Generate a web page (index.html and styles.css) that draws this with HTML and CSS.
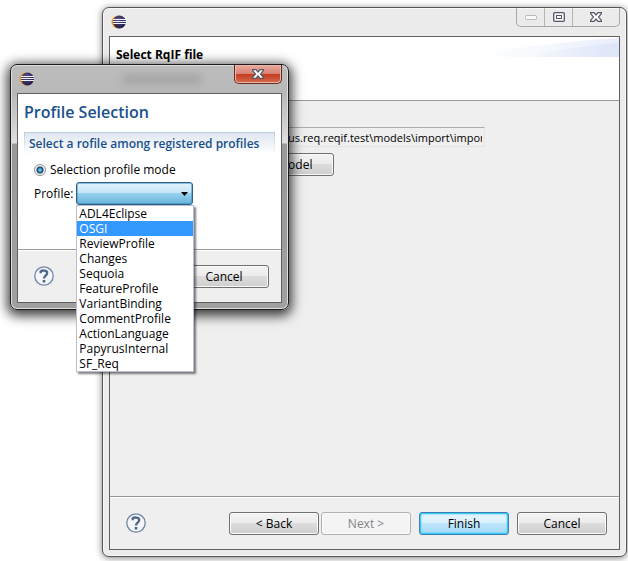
FILE: index.html
```html
<!DOCTYPE html>
<html lang="en">
<head>
<meta charset="utf-8">
<title>Select RqIF file</title>
<link rel="stylesheet" href="styles.css">
</head>
<body>
<svg class="defs" aria-hidden="true">
  <defs>
    <radialGradient id="ball" cx="40%" cy="30%" r="75%">
      <stop offset="0" stop-color="#554f86"/><stop offset="1" stop-color="#1f1a45"/>
    </radialGradient>
  </defs>
  <symbol id="eclipse" viewBox="0 0 16 16">
    <circle cx="7" cy="8" r="6.5" fill="#f09020"/>
    <circle cx="8.5" cy="8" r="6.5" fill="url(#ball)"/>
    <path d="M2 5.5H15M2 7.5H15M2 9.5H15" stroke="#eef0fb" stroke-width="1"/>
  </symbol>
  <symbol id="help" viewBox="0 0 20 20">
    <circle cx="10" cy="10" r="9.2" fill="#f4f6f9" stroke="#6f86a8" stroke-width="1.3"/>
    <path d="M6.7 7.2V5.3C8 4.3 13.2 3.8 13.2 7C13.2 9.6 10 9.5 10 12.4" fill="none" stroke="#50658c" stroke-width="2.3"/>
    <path d="M8.7 14h2.6v2.5H8.7z" fill="#50658c"/>
  </symbol>
  <symbol id="cross" viewBox="0 0 12 10">
    <path d="M.6.6H4L6 3 8 .6H11.4V1.6L8.5 5l2.9 3.4v1H8L6 7 4 9.4H.6v-1L3.5 5 .6 1.6z" fill="#fff" stroke="#555867" stroke-width="1.2"/>
  </symbol>
</svg>

<main class="window wizard">
  <header class="titlebar">
    <svg class="logo" aria-hidden="true"><use href="#eclipse"/></svg>
    <div class="caption-buttons">
      <button class="cap" aria-label="Minimize" disabled><svg viewBox="0 0 12 5"><rect x=".5" y=".5" width="11" height="4" rx="1" fill="#fafafa" stroke="#b8b8b8"/></svg></button>
      <button class="cap" aria-label="Maximize"><svg class="max" viewBox="0 0 12 10"><rect x=".7" y=".7" width="10.6" height="8.6" rx="1" fill="#fafafa" stroke="#555867" stroke-width="1.3"/><rect x="3.5" y="3.5" width="5" height="3" fill="#fff" stroke="#555867"/></svg></button>
      <button class="cap wide" aria-label="Close"><svg class="x"><use href="#cross"/></svg></button>
    </div>
  </header>
  <div class="client">
    <div class="banner">
      <svg class="swoosh" viewBox="0 0 170 20" preserveAspectRatio="none" aria-hidden="true">
        <defs><linearGradient id="sw"><stop offset="0" stop-color="#dfe6f9" stop-opacity="0"/><stop offset="1" stop-color="#d9e2f8"/></linearGradient></defs>
        <path d="M0 20V14C60 12 110 3 170 1V20z" fill="url(#sw)" opacity=".6"/>
        <path d="M50 20C90 14 120 9 170 6V20z" fill="url(#sw)" opacity=".7"/>
      </svg>
      <h1>Select RqIF file</h1>
    </div>
    <div class="content">
      <input class="path" type="text" aria-label="File" value="us.req.reqif.test\models\import\import">
      <button class="btn model">model</button>
    </div>
    <footer class="footer">
      <button class="help" aria-label="Help"><svg><use href="#help"/></svg></button>
      <div class="pair">
        <button class="btn">&lt; Back</button>
        <button class="btn" disabled>Next &gt;</button>
      </div>
      <button class="btn primary">Finish</button>
      <button class="btn">Cancel</button>
    </footer>
  </div>
</main>

<section class="window dialog" role="dialog" aria-labelledby="dlg-title">
  <header class="titlebar">
    <svg class="logo" aria-hidden="true"><use href="#eclipse"/></svg>
    <span class="glass-ghost" aria-hidden="true"></span>
    <button class="close" aria-label="Close"><svg class="x"><use href="#cross"/></svg></button>
  </header>
  <div class="client">
    <div class="form">
      <h2 id="dlg-title">Profile Selection</h2>
      <h3>Select a rofile among registered profiles</h3>
      <label class="mode"><input type="radio" name="mode" checked>Selection profile mode</label>
      <div class="row">
        <label for="profile">Profile:</label>
        <div class="combo">
          <select id="profile"><option></option></select>
          <svg class="arrow" viewBox="0 0 7 4" aria-hidden="true"><path d="M0 0H7L3.5 4z"/></svg>
          <ul class="list" role="listbox" aria-label="Profiles">
            <li role="option">ADL4Eclipse</li>
            <li role="option" class="active" aria-selected="true">OSGI</li>
            <li role="option">ReviewProfile</li>
            <li role="option">Changes</li>
            <li role="option">Sequoia</li>
            <li role="option">FeatureProfile</li>
            <li role="option">VariantBinding</li>
            <li role="option">CommentProfile</li>
            <li role="option">ActionLanguage</li>
            <li role="option">PapyrusInternal</li>
            <li role="option">SF_Req</li>
          </ul>
        </div>
      </div>
    </div>
    <footer class="footer">
      <button class="help" aria-label="Help"><svg><use href="#help"/></svg></button>
      <button class="btn">Cancel</button>
    </footer>
  </div>
</section>
</body>
</html>
```
FILE: styles.css
```css
* { box-sizing: border-box; }

body {
  margin: 0;
  min-height: 100vh;
  overflow: hidden;
  position: relative;
  background: #fff;
  color: #000;
  font: 12px/15px "Open Sans", "Noto Sans", sans-serif;
}

button, input, select { font: inherit; color: inherit; margin: 0; }
button { padding: 0; }
h1, h2, h3, ul { margin: 0; padding: 0; }
.defs { position: absolute; width: 0; height: 0; }

/* Window frames */
.window { position: absolute; display: flex; flex-direction: column; }
.wizard {
  inset: 7px 1px 4px 102px;
  padding: 0 6px 6px;
  border: 1px solid #555;
  border-radius: 7px;
  background: #ebebeb;
  box-shadow: inset 0 0 0 1px #f8f8f8, 0 1px 7px rgba(0, 0, 0, .5);
}
.dialog {
  top: 64px;
  left: 10px;
  width: 279px;
  padding: 0 6px 6px;
  border: 1px solid #1c1c1c;
  border-radius: 7px;
  background: linear-gradient(#bdbdbd 0, #b8b8b8 28px, #d0d0d0 60px, #e0e0e0 78px, #999 79px, #a0a0a0);
  box-shadow: inset 0 0 0 1px #dedede, 0 3px 12px 3px rgba(0, 0, 0, .75);
}
.titlebar { display: flex; align-items: flex-start; height: 28px; }
.logo { width: 16px; height: 16px; margin: 6px 0 0 2px; }
.client {
  flex: 1;
  display: flex;
  flex-direction: column;
  border: 1px solid #606060;
  background: #efefef;
}

.caption-buttons {
  display: flex;
  margin-left: auto;
  border: 1px solid #a9a9a9;
  border-top: 0;
  border-radius: 0 0 5px 5px;
}
.cap {
  display: grid;
  place-items: center;
  width: 28px;
  height: 18px;
  border: 0;
  border-right: 1px solid #b5b5b5;
  background: none;
}
.cap svg { width: 12px; height: 5px; }
.cap.wide { width: 46px; border-right: 0; }
.cap .max, .cap .x, .close .x { width: 12px; height: 10px; }
.close {
  display: grid;
  place-items: center;
  width: 48px;
  height: 19px;
  margin-left: auto;
  border: 1px solid #642c24;
  border-top: 0;
  border-radius: 0 0 5px 5px;
  background: linear-gradient(#e8aa9d, #d98474 48%, #c43b20 50%, #d46b4c);
  box-shadow: inset 0 0 0 1px #efb5a8;
}
.glass-ghost {
  width: 78px;
  height: 8px;
  margin: 10px 0 0 88px;
  background: #a0a0a0;
  filter: blur(4px);
}

/* Buttons */
.btn {
  width: 90px;
  height: 23px;
  border: 1px solid #707070;
  border-radius: 3px;
  background: linear-gradient(#f3f3f3, #ebebeb 49%, #dcdcdc 50%, #cecece);
  box-shadow: inset 0 0 0 1px #fafafa;
}
.btn:disabled {
  border-color: #adb2b5;
  background: #f4f4f4;
  color: #838383;
}
.btn.primary {
  border-color: #3c7fb1;
  background: linear-gradient(#eaf6fd, #d9f0fc 49%, #bee6fd 50%, #a7d9f5);
  box-shadow: inset 0 0 0 1px #35cafb, inset 0 0 2px 1px #35cafb;
}
.help { width: 20px; height: 20px; border: 0; background: none; margin-right: auto; }
.help svg { display: block; width: 20px; height: 20px; }
.footer { display: flex; align-items: center; border-top: 1px solid #999; box-shadow: inset 0 1px #fff; }

/* Wizard */
.banner {
  position: relative;
  height: 64px;
  padding: 10px 6px;
  border-bottom: 1px solid #999;
  background: #fff;
}
h1 { font-size: 12px; line-height: 15px; font-weight: 700; }
.swoosh { position: absolute; top: 0; right: 0; width: 140px; height: 20px; }
.content {
  flex: 1;
  display: flex;
  flex-direction: column;
  align-items: flex-start;
  gap: 6px;
  padding: 26px 134px 0 166px;
}
.path {
  width: 100%;
  height: 20px;
  padding: 0 2px 0 11px;
  border: 1px solid #e2e6ea;
  border-top-color: #abadb3;
  background: #efefef;
  font-size: 11px;
}
.btn.model { width: 58px; padding-right: 22px; text-align: right; }
.wizard .footer { height: 53px; padding: 0 12px 0 16px; gap: 8px; }
.pair { display: flex; gap: 2px; }

/* Profile dialog */
.form { height: 155px; padding: 8px 6px 0; background: #fff; }
h2 { font-size: 16px; line-height: 20px; color: #19508c; font-weight: 600; }
h3 {
  height: 22px;
  margin-top: 10px;
  padding: 3px 4px;
  border: solid #c3d2e3;
  border-width: 1px 1px 0;
  border-image: linear-gradient(#b9cbe0, #fff) 1;
  background: linear-gradient(#e0e7f0, #fff);
  color: #19508c;
  font-size: 12px;
  line-height: 15px;
  font-weight: 600;
}
.mode { display: flex; align-items: center; gap: 4px; margin: 8px 0 0 10px; }
.mode input {
  appearance: none;
  width: 12px;
  height: 12px;
  border: 1px solid #8e8f8f;
  border-radius: 50%;
  background: radial-gradient(circle at 50% 50%, #8fdcf8 0, #2c8ab8 2px, #153a55 3px, #e4e8ea 4px, #fff 5px);
}
.row { display: flex; align-items: center; gap: 3px; margin: 5px 0 0 10px; }
.combo { position: relative; width: 117px; }
.combo select {
  display: block;
  appearance: none;
  width: 100%;
  height: 23px;
  border: 1px solid #2c628b;
  border-radius: 3px;
  background: linear-gradient(#e3f3fb, #c4e5f6 49%, #98d1ef 50%, #68b3db);
  box-shadow: inset 0 0 0 1px rgba(60, 127, 177, .5);
}
.arrow { position: absolute; top: 10px; right: 5px; width: 7px; height: 4px; pointer-events: none; }
.list {
  position: absolute;
  z-index: 1;
  top: 100%;
  left: 0;
  width: 118px;
  list-style: none;
  border: 1px solid #b9bdd0;
  background: #fff;
  box-shadow: 2px 2px 2px rgba(0, 0, 0, .5);
}
.list li { padding: 0 2px; height: 15px; }
.list .active { background: #3399ff; color: #fff; }
.dialog .footer { height: 53px; padding: 0 12px 0 16px; }
```
